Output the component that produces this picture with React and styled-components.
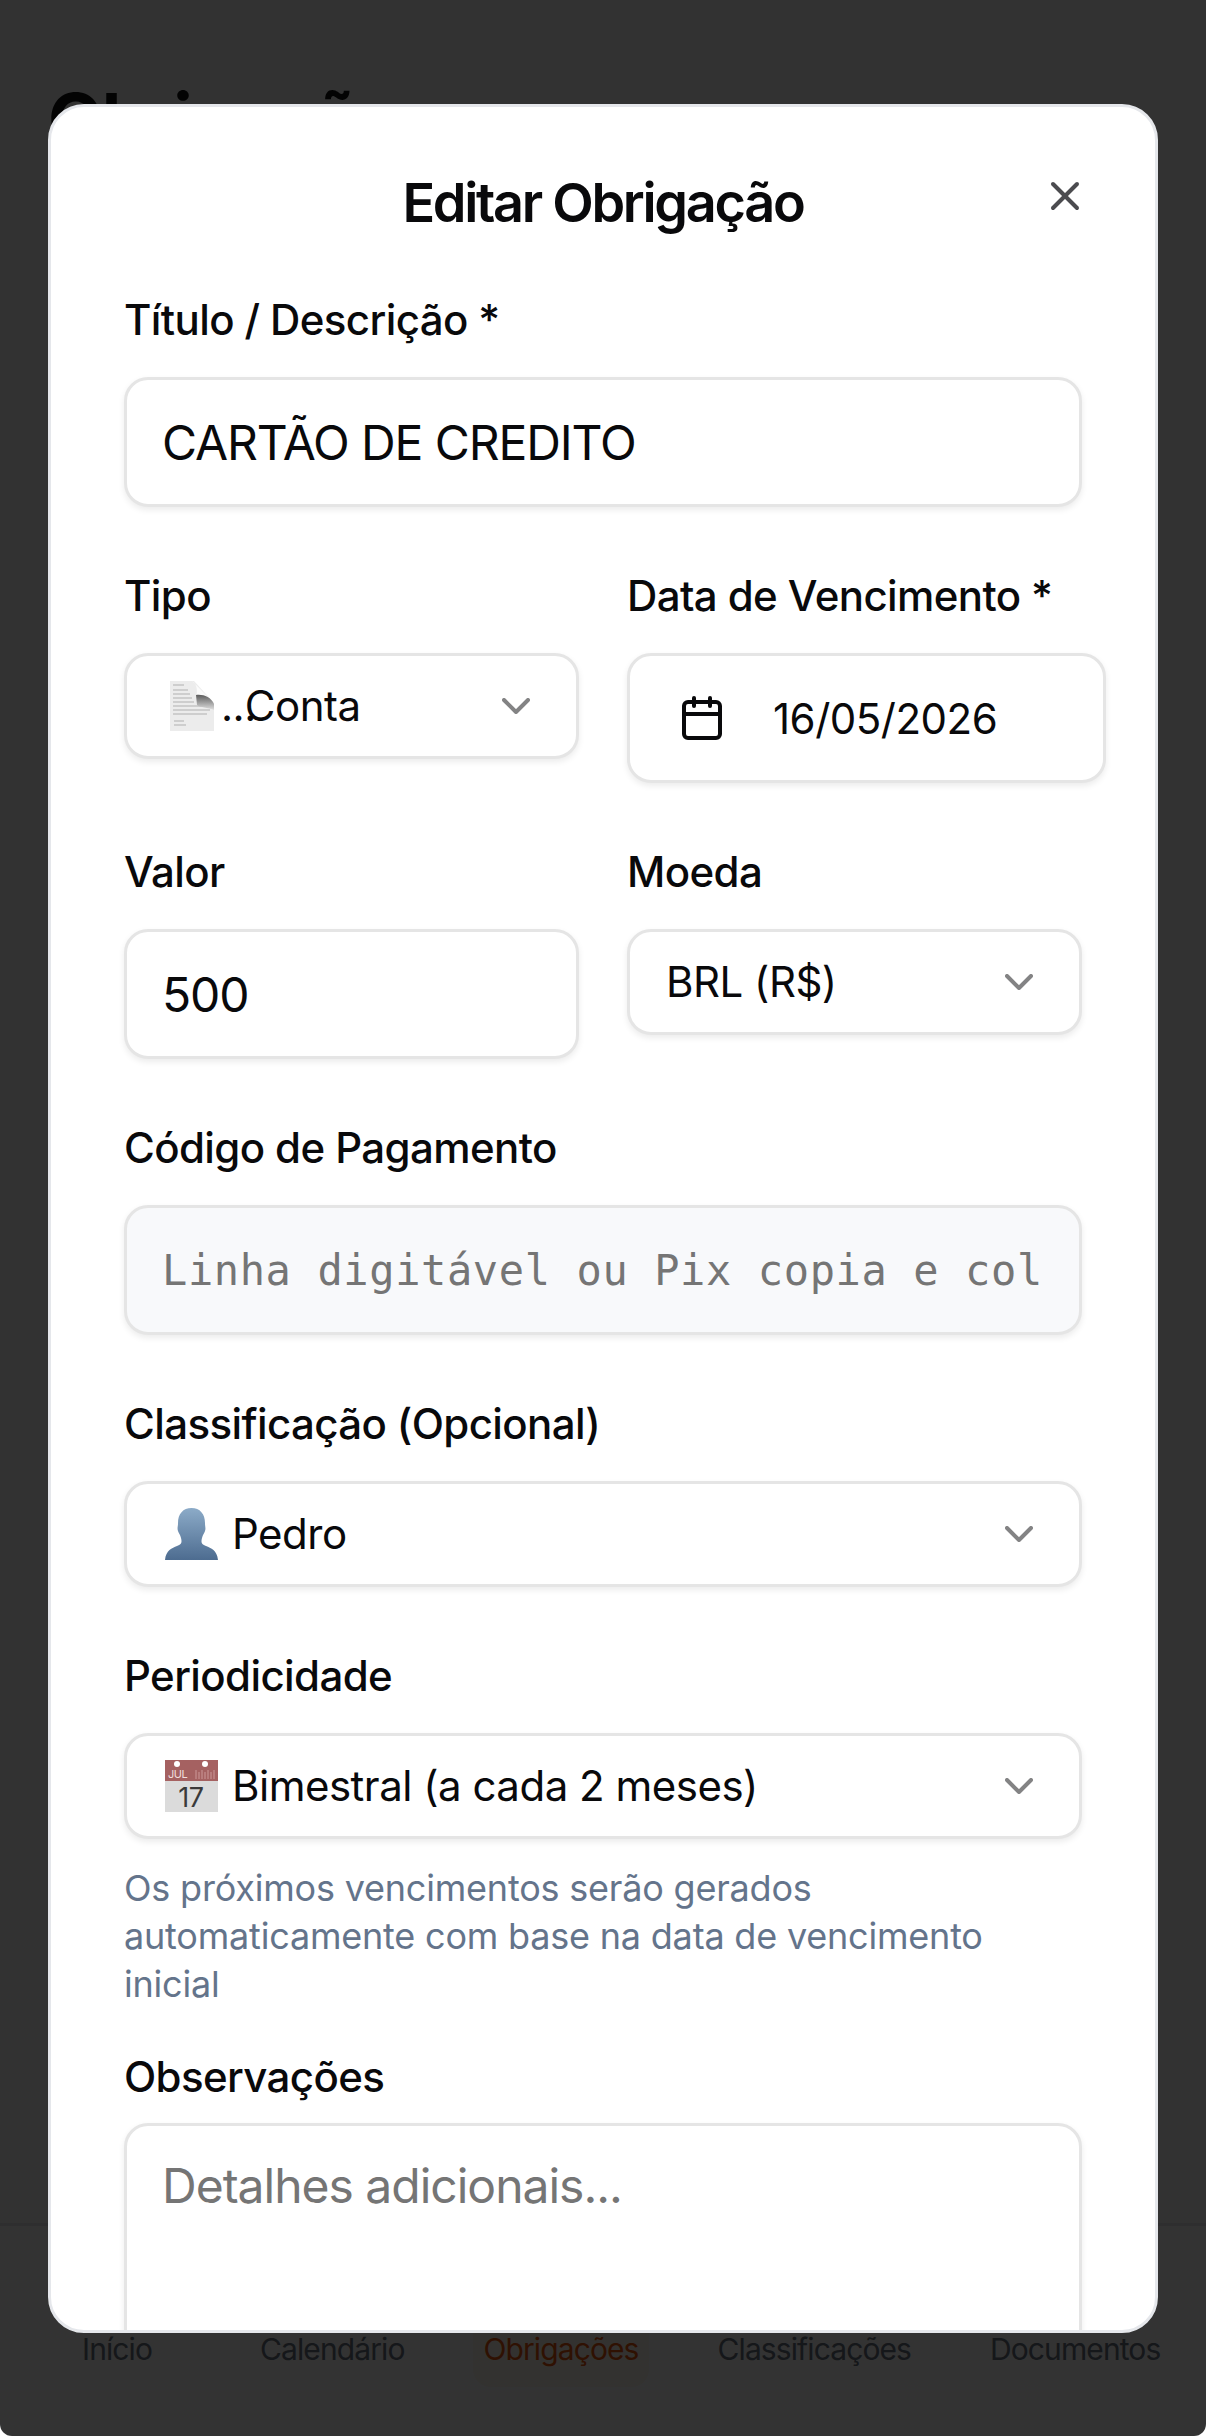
import React from "react";
import styled, { createGlobalStyle } from "styled-components";
import { X, ChevronDown, Calendar } from "lucide-react";

const Global = createGlobalStyle`
  html, body { margin: 0; padding: 0; background: #fff; }
  * { box-sizing: border-box; }
  body { font-family: Inter, "Liberation Sans", sans-serif; }
`;

const Screen = styled.div`
  position: relative;
  width: 1206px;
  height: 2436px;
  overflow: hidden;
  background: #f8f9fa;
  border-radius: 0 0 12px 12px;
`;
const PageTitle = styled.h1`
  margin: 0;
  padding: 71px 48px 0;
  font-size: 72px;
  line-height: 96px;
  font-weight: 700;
  letter-spacing: -1.8px;
  color: #111;
`;
const BottomNav = styled.nav`
  position: absolute;
  left: 0;
  right: 0;
  top: 2223px;
  bottom: 0;
  background: #fff;
  border-top: 3px solid #e5e7eb;
  display: flex;
  align-items: flex-start;
  gap: 59px;
  padding-left: 43px;
`;
const NavItem = styled.div`
  height: 161px;
  min-width: 148px;
  padding: 105px 10px 0;
  text-align: center;
  white-space: nowrap;
  font-size: 30px;
  line-height: 36px;
  letter-spacing: -0.9px;
  color: ${(p) => (p.$active ? "#ea580c" : "#6b7280")};
  background: ${(p) => (p.$active ? "#fff7ed" : "transparent")};
  border-radius: 18px;
`;
const Backdrop = styled.div`
  position: absolute;
  inset: 0;
  background: rgba(0, 0, 0, 0.8);
`;
const Modal = styled.section`
  position: absolute;
  left: 48px;
  top: 104px;
  width: 1110px;
  height: 2229px;
  background: #fff;
  border: 3px solid #e5e7eb;
  border-radius: 36px;
  padding: 0 73px;
  overflow: hidden;
`;
const Title = styled.h2`
  margin: 0;
  padding-top: 60px;
  height: 192px;
  text-align: center;
  font-size: 54px;
  line-height: 72px;
  font-weight: 600;
  letter-spacing: -2.3px;
  color: #09090b;
`;
const CloseButton = styled.button`
  position: absolute;
  top: 65px;
  right: 66px;
  width: 48px;
  height: 48px;
  padding: 0;
  border: 0;
  background: none;
  color: #4b4b4f;
  display: flex;
`;
const Form = styled.div`
  display: flex;
  flex-direction: column;
  gap: 68px;
`;
const Field = styled.div`
  display: flex;
  flex-direction: column;
  min-width: 0;
`;
const Label = styled.label`
  font-size: 42px;
  line-height: 42px;
  font-weight: 500;
  letter-spacing: -0.6px;
  color: #09090b;
  margin-bottom: ${(p) => (p.$tight ? "25px" : "36px")};
`;
const Row = styled.div`
  display: grid;
  grid-template-columns: 455px 455px;
  gap: 48px;
  align-items: start;
`;
const boxBase = `
  border: 3px solid #e5e5e5;
  border-radius: 24px;
  background: #fff;
  box-shadow: 0 3px 6px rgba(0, 0, 0, 0.08);
  color: #09090b;
`;
const Input = styled.input`
  ${boxBase}
  display: block;
  width: 100%;
  height: 130px;
  padding: 0 36px 0 35px;
  font-family: inherit;
  font-size: 48px;
  letter-spacing: -1.1px;
  outline: none;
  background: ${(p) => (p.$muted ? "#f8f9fb" : "#fff")};
  &::placeholder { color: #757575; }
`;
const MonoInput = styled(Input)`
  font-family: "DejaVu Sans Mono", "Liberation Mono", monospace;
  font-size: 42px;
  letter-spacing: 0.62px;
`;
const DateBox = styled.div`
  ${boxBase}
  width: 479px;
  height: 130px;
  display: flex;
  align-items: center;
  padding-left: 48px;
  gap: 47px;
  font-size: 42px;
  letter-spacing: -0.5px;
`;
const Select = styled.div`
  ${boxBase}
  height: 106px;
  display: flex;
  align-items: center;
  padding: 0 36px;
  font-size: 42px;
  line-height: 60px;
  letter-spacing: -0.5px;
  svg.chev { margin-left: auto; color: #09090b; opacity: 0.5; flex: none; }
`;
const Dots = styled.span`
  margin: 0 -11px 0 -3px;
`;
const ValueText = styled.span`
  margin-left: ${(p) => p.$offset || 0}px;
`;
const Hint = styled.p`
  margin: 25px 0 -20px;
  font-size: 36px;
  line-height: 48px;
  letter-spacing: -0.2px;
  color: #64748b;
`;
const TextArea = styled.textarea`
  ${boxBase}
  display: block;
  width: 100%;
  height: 320px;
  padding: 24px 36px 24px 35px;
  font-family: inherit;
  font-size: 48px;
  line-height: 72px;
  letter-spacing: -1px;
  outline: none;
  resize: none;
  &::placeholder { color: #757575; }
`;
const EmojiSvg = styled.svg`
  flex: none;
  margin-left: ${(p) => p.$left || 2}px;
`;

const DocEmoji = () => (
  <EmojiSvg $left={7} width="44" height="50" viewBox="0 0 44 50">
    <defs>
      <linearGradient id="fold" x1="0" y1="1" x2="0" y2="0">
        <stop offset="0" stopColor="#e0e0e0" />
        <stop offset="1" stopColor="#5c5c5c" />
      </linearGradient>
    </defs>
    <path d="M0 0H24L44 22V50H0Z" fill="#ececec" />
    <path d="M3 4h11M3 9h15M3 13h17M3 17h19M3 21h21M3 25h37M3 29h37M3 33h34M4 40h10M4 44h12" stroke="#c4c4c4" strokeWidth="1.4" />
    <path d="M22 0C27 3 28 10 26 16C33 14 40 16 44 22Z" fill="#fbfbfb" />
    <path d="M26 14C33 13 41 16 44 23V29C38 26 30 27 27 24Z" fill="url(#fold)" />
  </EmojiSvg>
);
const PersonEmoji = () => (
  <EmojiSvg width="53" height="52" viewBox="0 0 53 52">
    <defs>
      <linearGradient id="person" x1="0" y1="0" x2="0" y2="1">
        <stop offset="0" stopColor="#8cabc8" />
        <stop offset="1" stopColor="#4d6c90" />
      </linearGradient>
    </defs>
    <path d="M26.5 0C35 0 40 6 40 15C40 19 41 20 40 23C39 26 38 26 37 30C36 34 36 36 41 38C46 40 52 42 53 52H0C1 42 7 40 12 38C17 36 17 34 16 30C15 26 14 26 13 23C12 20 13 19 13 15C13 6 18 0 26.5 0Z" fill="url(#person)" />
  </EmojiSvg>
);
const CalendarEmoji = () => (
  <EmojiSvg width="53" height="52" viewBox="0 0 53 52">
    <rect width="53" height="52" fill="#dbdbdb" />
    <rect width="53" height="21" fill="#a56161" />
    <circle cx="12" cy="4" r="3" fill="#fff" />
    <circle cx="40" cy="4" r="3" fill="#fff" />
    <path d="M31 10v9M34 12v7M37 10v9M40 12v7M43 10v9M46 12v7M49 10v9" stroke="#c99" strokeWidth="1" />
    <text x="3" y="18" fontFamily="Inter, sans-serif" fontSize="11" fill="#f0dddd">JUL</text>
    <text x="26" y="47" textAnchor="middle" fontFamily="Inter, sans-serif" fontSize="27" fill="#3a3a3a">17</text>
  </EmojiSvg>
);

const Chevron = () => <ChevronDown className="chev" size={48} strokeWidth={2} />;

export default function App() {
  return (
    <Screen>
      <Global />
      <PageTitle>Obrigações</PageTitle>
      <BottomNav>
        <NavItem>Início</NavItem>
        <NavItem>Calendário</NavItem>
        <NavItem $active>Obrigações</NavItem>
        <NavItem>Classificações</NavItem>
        <NavItem>Documentos</NavItem>
      </BottomNav>
      <Backdrop />
      <Modal>
        <Title>Editar Obrigação</Title>
        <CloseButton aria-label="Fechar"><X size={48} strokeWidth={2} /></CloseButton>
        <Form>
          <Field>
            <Label>Título / Descrição *</Label>
            <Input readOnly value="CARTÃO DE CREDITO" />
          </Field>
          <Row>
            <Field>
              <Label>Tipo</Label>
              <Select>
                <DocEmoji />
                <ValueText $offset={10}><Dots>...</Dots>Conta</ValueText>
                <Chevron />
              </Select>
            </Field>
            <Field>
              <Label>Data de Vencimento *</Label>
              <DateBox><Calendar size={48} strokeWidth={2} />16/05/2026</DateBox>
            </Field>
          </Row>
          <Row>
            <Field>
              <Label>Valor</Label>
              <Input readOnly value="500" />
            </Field>
            <Field>
              <Label>Moeda</Label>
              <Select>BRL (R$)<Chevron /></Select>
            </Field>
          </Row>
          <Field>
            <Label>Código de Pagamento</Label>
            <MonoInput $muted readOnly placeholder="Linha digitável ou Pix copia e cola" />
          </Field>
          <Field>
            <Label>Classificação (Opcional)</Label>
            <Select><PersonEmoji /><ValueText $offset={14}>Pedro</ValueText><Chevron /></Select>
          </Field>
          <Field>
            <Label>Periodicidade</Label>
            <Select><CalendarEmoji /><ValueText $offset={14}>Bimestral (a cada 2 meses)</ValueText><Chevron /></Select>
            <Hint>Os próximos vencimentos serão gerados automaticamente com base na data de vencimento inicial</Hint>
          </Field>
          <Field>
            <Label $tight>Observações</Label>
            <TextArea readOnly placeholder="Detalhes adicionais..." />
          </Field>
        </Form>
      </Modal>
    </Screen>
  );
}
